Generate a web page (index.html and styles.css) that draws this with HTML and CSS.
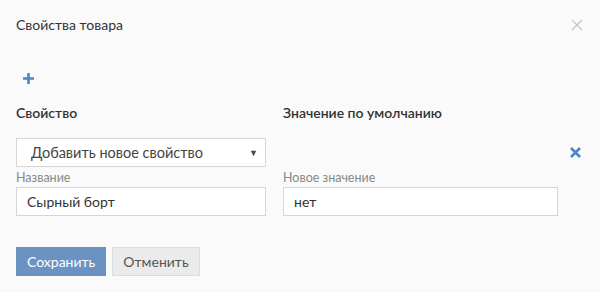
FILE: index.html
```html
<!DOCTYPE html>
<html lang="ru">
<head>
  <meta charset="UTF-8">
  <title>Свойства товара</title>
  <link rel="stylesheet" href="styles.css">
</head>
<body>
  <div class="modal">
    <div class="modal-header">
      <span class="modal-title">Свойства товара</span>
      <svg class="close" width="12" height="12" viewBox="0 0 12 12">
        <path d="M1 1 L11 11 M11 1 L1 11" stroke="#c8c8c8" stroke-width="1.4" fill="none"/>
      </svg>
    </div>
    <div class="add-row">
      <svg class="plus" width="11" height="11" viewBox="0 0 11 11">
        <path d="M5.5 0 V11 M0 5.5 H11" stroke="#4a86c5" stroke-width="2.6" fill="none"/>
      </svg>
    </div>
    <div class="grid">
      <div class="col-head">Свойство</div>
      <div class="col-head">Значение по умолчанию</div>
      <div></div>

      <div class="select">
        <span>Добавить новое свойство</span>
        <span class="arrow">&#9660;</span>
      </div>
      <div></div>
      <div class="remove">
        <svg width="11" height="11" viewBox="0 0 11 11">
          <path d="M1 1 L10 10 M10 1 L1 10" stroke="#4a86c5" stroke-width="2.6" fill="none"/>
        </svg>
      </div>

      <div class="field">
        <label>Название</label>
        <div class="input">Сырный борт</div>
      </div>
      <div class="field">
        <label>Новое значение</label>
        <div class="input">нет</div>
      </div>
      <div></div>
    </div>
    <div class="actions">
      <button class="btn primary">Сохранить</button>
      <button class="btn">Отменить</button>
    </div>
  </div>
</body>
</html>
```

FILE: styles.css
```css
body {
  margin: 0;
  background: #fafafa;
  font-family: Lato, "Open Sans", sans-serif;
  color: #333;
}
.modal {
  padding: 0 16px;
}
.modal-header {
  display: flex;
  justify-content: space-between;
  align-items: center;
  height: 48px;
}
.modal-title {
  font-size: 14px;
  color: #333;
}
.close {
  margin-right: 1px;
  margin-top: 1px;
}
.add-row {
  height: 25px;
  padding: 20px 0 0 7px;
}
.grid {
  display: grid;
  grid-template-columns: 250px 275px 1fr;
  column-gap: 17px;
}
.col-head {
  font-size: 14px;
  font-weight: 600;
  color: #333;
  height: 35px;
  padding-top: 10px;
  line-height: 20px;
}
.select {
  height: 29px;
  box-sizing: border-box;
  border: 1px solid #d6d6d6;
  background: #fff;
  display: flex;
  justify-content: space-between;
  align-items: center;
  padding: 0 7px 0 14px;
  font-size: 14.5px;
  color: #444;
}
.arrow {
  font-size: 9px;
  color: #444;
}
.remove {
  display: flex;
  align-items: center;
}
.remove svg {
  margin-left: -5px;
}
.field label {
  display: block;
  font-size: 12.5px;
  color: #888;
  height: 20px;
  line-height: 22px;
}
.input {
  height: 29px;
  box-sizing: border-box;
  border: 1px solid #d6d6d6;
  background: #fff;
  font-size: 14px;
  color: #333;
  padding: 0 10px;
  line-height: 27px;
}
.actions {
  display: flex;
  gap: 6px;
  margin-top: 31px;
}
.btn {
  font-family: inherit;
  font-size: 14px;
  height: 29px;
  padding: 0 10px;
  border: 1px solid #dcdcdc;
  background: #ebebeb;
  color: #555;
}
.btn.primary {
  background: #6a93c3;
  border-color: #6a93c3;
  color: #fff;
}
```
